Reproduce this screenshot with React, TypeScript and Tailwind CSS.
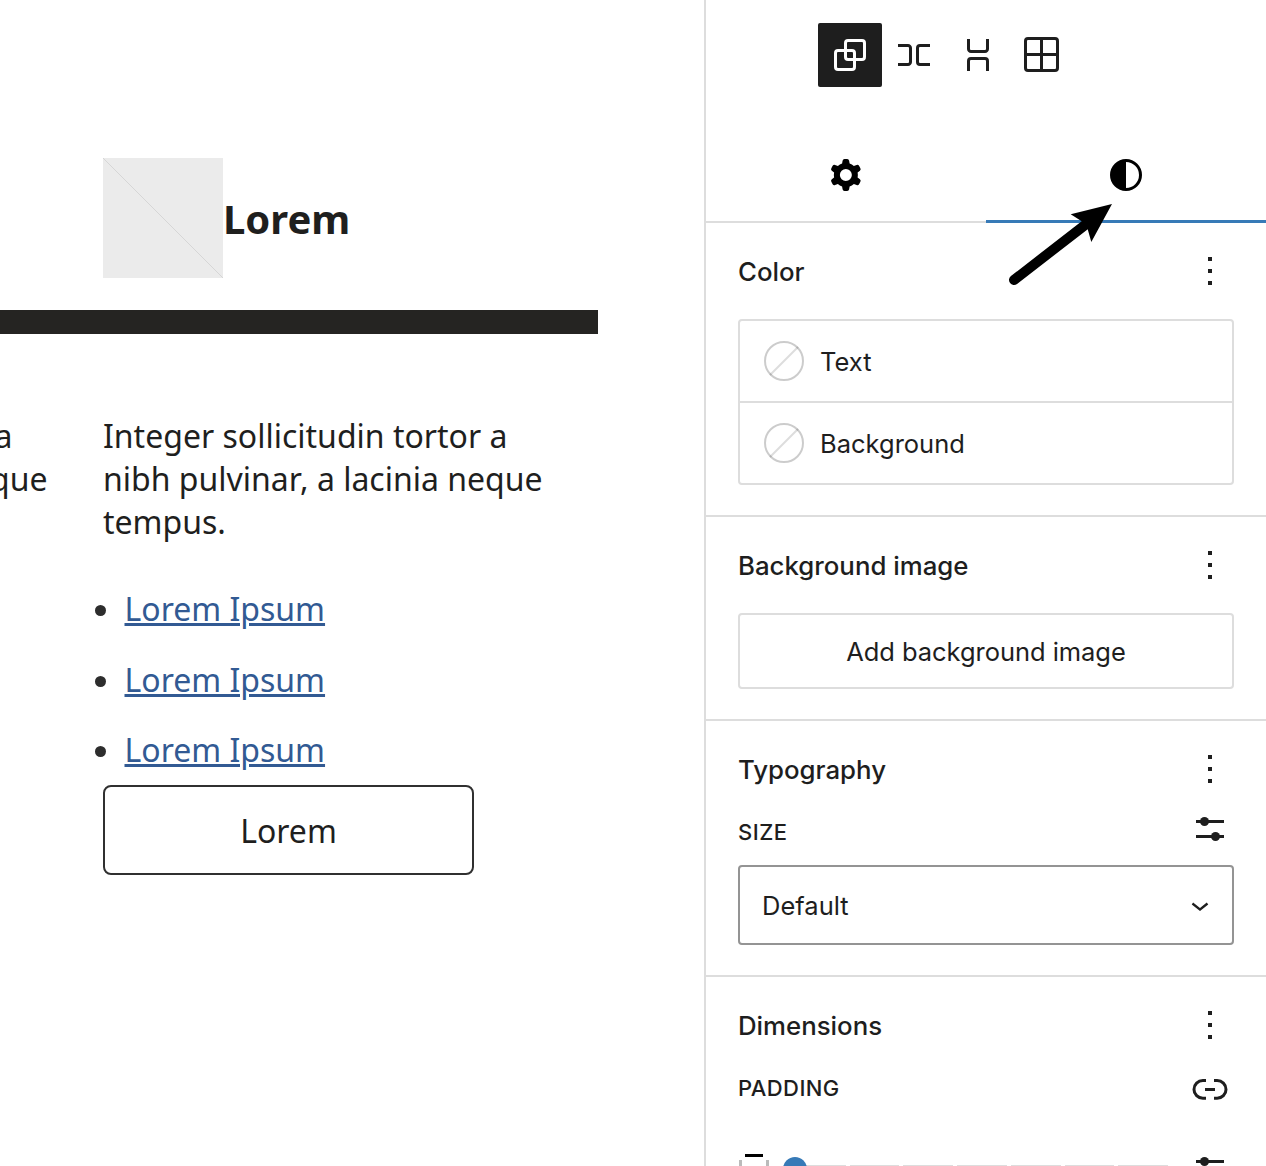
import type { ReactNode } from 'react';

const INK = '#1e1e1e';

function ToolButton({ active = false, label, children }: { active?: boolean; label: string; children: ReactNode }) {
  return (
    <button
      aria-label={label}
      className={
        active
          ? 'size-16 rounded-[2px] bg-[#1e1e1e] text-white'
          : 'size-16 rounded-[2px] text-[#1e1e1e]'
      }
    >
      <svg viewBox="0 0 64 64" className="size-16" fill="none" stroke="currentColor" strokeWidth="3">
        {children}
      </svg>
    </button>
  );
}

function MoreDots() {
  return (
    <button aria-label="Options" className="flex size-12 flex-col items-center justify-center gap-2">
      <span className="size-1 bg-[#1e1e1e]" />
      <span className="size-1 bg-[#1e1e1e]" />
      <span className="size-1 bg-[#1e1e1e]" />
    </button>
  );
}

function SlidersIcon() {
  return (
    <svg viewBox="0 0 48 48" className="size-12" fill={INK}>
      <rect x="10" y="15" width="28" height="3" />
      <circle cx="18.5" cy="16.5" r="4.5" />
      <rect x="10" y="30" width="28" height="3" />
      <circle cx="29.5" cy="31.5" r="4.5" />
    </svg>
  );
}

function LinkIcon() {
  return (
    <svg viewBox="0 0 24 24" className="size-12" fill={INK}>
      <path d="M10 17.389H8.444A5.194 5.194 0 1 1 8.444 7H10v1.5H8.444a3.694 3.694 0 0 0 0 7.389H10v1.5ZM14 7h1.556a5.194 5.194 0 0 1 0 10.39H14v-1.5h1.556a3.694 3.694 0 0 0 0-7.39H14V7Zm-4.5 6h5v-1.5h-5V13Z" />
    </svg>
  );
}

function Panel({ title, children }: { title: string; children: ReactNode }) {
  return (
    <section className="border-b-2 border-[#dddddd] px-8 pt-4 pb-[30px]">
      <div className="flex h-16 items-center justify-between">
        <h2 className="pt-0.5 text-[25.8px] leading-8 font-medium">{title}</h2>
        <MoreDots />
      </div>
      {children}
    </section>
  );
}

function ColorRow({ label }: { label: string }) {
  return (
    <div className="flex h-20 items-center gap-4 px-6">
      <svg viewBox="0 0 40 40" className="size-10" fill="none">
        <path d="M6 34 34 6" stroke="#dddddd" strokeWidth="2" />
        <circle cx="20" cy="20" r="19" stroke="#000000" strokeOpacity="0.2" strokeWidth="2" />
      </svg>
      <span className="pt-0.5">{label}</span>
    </div>
  );
}

function Paragraph() {
  return (
    <p className="w-[495px] shrink-0 whitespace-nowrap [font-kerning:none]">
      Integer sollicitudin tortor a<br />
      nibh pulvina<span className="tracking-[-2px]">r</span>, a lacinia neque
      <br />
      tempus.
    </p>
  );
}

function Canvas() {
  return (
    <main className="w-[704px] shrink-0 overflow-hidden pt-[158px] font-['Noto_Sans',sans-serif] text-[32px] leading-[43px] text-[#1f1f1e]">
      <div className="ml-[103px] flex h-[120px] items-center">
        <svg viewBox="0 0 120 120" className="size-[120px] bg-[#ebebeb]">
          <path d="M0 0 120 120" stroke="#d6d6d6" strokeWidth="1" />
        </svg>
        <h1 className="pt-0.5 text-[40px] leading-[54px] font-bold">Lorem</h1>
      </div>
      <div className="mt-8 h-6 w-[598px] bg-[#252422]" />
      <div className="mt-20 -ml-[392px] flex">
        <Paragraph />
        <Paragraph />
      </div>
      <ul className="mt-11 ml-[95px] flex flex-col gap-[27.5px]">
        {[0, 1, 2].map((n) => (
          <li key={n} className="flex items-center">
            <span className="mt-1 size-[11px] rounded-full bg-[#2d2d2d]" />
            <a className="ml-[18.5px] text-[#325a93] underline decoration-[3px] underline-offset-2">Lorem Ipsum</a>
          </li>
        ))}
      </ul>
      <button className="mt-[14px] ml-[103px] h-[90px] w-[371px] rounded-lg border-2 border-[#303030]">Lorem</button>
    </main>
  );
}

function Tabs() {
  return (
    <div className="relative mt-10 flex h-24 border-b-2 border-[#dddddd]">
      <button aria-label="Settings" className="flex h-24 flex-1 items-center justify-center">
        <svg viewBox="0 0 24 24" className="size-12" fill="#000000" fillRule="evenodd">
          <path d="M10.289 4.836A1 1 0 0111.275 4h1.306a1 1 0 01.987.836l.244 1.466c.787.26 1.503.679 2.108 1.218l1.393-.522a1 1 0 011.216.437l.653 1.13a1 1 0 01-.23 1.273l-1.148.944a6.025 6.025 0 010 2.435l1.149.946a1 1 0 01.23 1.272l-.653 1.13a1 1 0 01-1.216.437l-1.394-.522c-.605.54-1.32.958-2.108 1.218l-.244 1.466a1 1 0 01-.987.836h-1.306a1 1 0 01-.986-.836l-.244-1.466a5.995 5.995 0 01-2.108-1.218l-1.394.522a1 1 0 01-1.217-.436l-.653-1.131a1 1 0 01.23-1.272l1.149-.946a6.026 6.026 0 010-2.435l-1.148-.944a1 1 0 01-.23-1.272l.653-1.131a1 1 0 011.217-.437l1.393.522a5.994 5.994 0 012.108-1.218l.244-1.466zM14.929 12a3 3 0 11-6 0 3 3 0 016 0z" />
        </svg>
      </button>
      <button aria-label="Styles" className="flex h-24 flex-1 items-center justify-center border-b-3 border-[#377ab7] pt-[3px]">
        <svg viewBox="0 0 24 24" className="size-12" fill="#000000" fillRule="evenodd">
          <path d="M20 12a8 8 0 1 1-16 0 8 8 0 0 1 16 0Zm-1.5 0a6.5 6.5 0 0 1-6.5 6.5v-13a6.5 6.5 0 0 1 6.5 6.5Z" />
        </svg>
      </button>
      <svg viewBox="0 0 110 90" className="pointer-events-none absolute top-[73px] left-[299px] h-[90px] w-[110px]">
        <path d="M9 80 82 23.5" stroke="#000000" strokeWidth="10" strokeLinecap="round" />
        <path d="M107 4 65.700 14.300 76.700 21.300 82.700 29.300 86.300 42Z" fill="#000000" />
      </svg>
    </div>
  );
}

function Sidebar() {
  return (
    <aside className="w-[562px] shrink-0 border-l-2 border-[#dddddd] font-['Inter',sans-serif] text-[25.5px] leading-8 text-[#1e1e1e]">
      <div className="flex pt-[23px] pl-28">
        <ToolButton active label="Unite">
          <rect x="27.500" y="17.500" width="19" height="19" rx="2.500" />
          <rect x="17.500" y="27.500" width="19" height="19" rx="2.500" />
        </ToolButton>
        <ToolButton label="Join horizontally">
          <path d="M16 22.500H26a2.500 2.500 0 0 1 2.500 2.500V39a2.500 2.500 0 0 1-2.500 2.500H16M48 22.500H38a2.500 2.500 0 0 0-2.500 2.500V39a2.500 2.500 0 0 0 2.500 2.500H48" />
        </ToolButton>
        <ToolButton label="Join vertically">
          <path d="M22.500 16V26a2.500 2.500 0 0 0 2.500 2.500H39a2.500 2.500 0 0 0 2.500-2.500V16M22.500 48V38a2.500 2.500 0 0 1 2.500-2.500H39a2.500 2.500 0 0 1 2.500 2.500V48" />
        </ToolButton>
        <ToolButton label="Grid">
          <rect x="15.500" y="15.500" width="32" height="32" rx="2.500" />
          <path d="M31.500 15V48M15 31.500H48" />
        </ToolButton>
      </div>
      <Tabs />
      <Panel title="Color">
        <div className="mt-4 rounded-[4px] border-2 border-[#dddddd]">
          <ColorRow label="Text" />
          <div className="border-t-2 border-[#dddddd]">
            <ColorRow label="Background" />
          </div>
        </div>
      </Panel>
      <Panel title="Background image">
        <button className="mt-4 block h-[76px] w-full rounded-[4px] border-2 border-[#dddddd] pt-0.5 tracking-[-0.05px]">
          Add background image
        </button>
      </Panel>
      <Panel title="Typography">
        <div className="mt-1 flex h-12 items-center justify-between">
          <h3 className="pt-1.5 text-[22px] leading-7 font-medium tracking-[0.5px]">SIZE</h3>
          <SlidersIcon />
        </div>
        <div className="mt-3 flex h-20 items-center justify-between rounded-[4px] border-2 border-[#949494] pr-[14px] pl-[22px]">
          <span className="pt-0.5">Default</span>
          <svg viewBox="0 0 24 24" className="size-9" fill={INK}>
            <path d="M17.500 11.600L12 16l-5.500-4.400.9-1.200L12 14l4.500-3.600 1 1.200z" />
          </svg>
        </div>
      </Panel>
      <Panel title="Dimensions">
        <div className="mt-2 flex h-12 items-center justify-between">
          <h3 className="pb-0.5 text-[22px] leading-7 font-medium tracking-[0.4px]">PADDING</h3>
          <LinkIcon />
        </div>
        <div className="mt-8 flex h-12 items-center">
          <svg viewBox="0 0 32 32" className="size-8" fill="none" strokeWidth="3">
            <path d="M7 2.500H25" stroke="#000000" />
            <path d="M2.500 7V23M29.500 7V23M7 28.500H25" stroke="#bbbbbb" />
          </svg>
          <div className="relative ml-[26px] flex w-[372px] gap-1">
            {[0, 1, 2, 3, 4, 5, 6].map((n) => (
              <span key={n} className="h-2 flex-1 bg-[#dddddd]" />
            ))}
            <span className="absolute -top-2 -left-[13px] size-6 rounded-full bg-[#377ab7]" />
          </div>
          <span className="ml-auto">
            <SlidersIcon />
          </span>
        </div>
      </Panel>
    </aside>
  );
}

export default function App() {
  return (
    <div className="flex h-[1166px] w-[1266px] overflow-hidden bg-white">
      <Canvas />
      <Sidebar />
    </div>
  );
}
